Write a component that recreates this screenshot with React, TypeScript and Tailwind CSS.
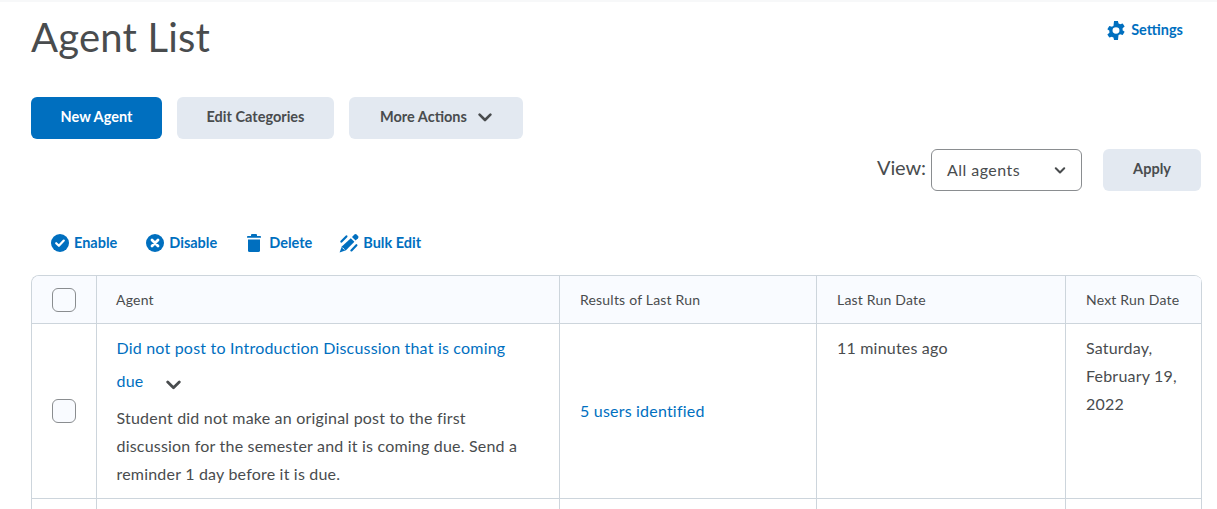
import React from "react";

const blue = "text-[#006fbf]";

function Chevron({ className }: { className?: string }) {
  return (
    <svg viewBox="0 0 14 9" className={className} fill="none" stroke="currentColor" strokeWidth="2.6" strokeLinecap="round" strokeLinejoin="round">
      <path d="M1.6 1.6 7 7 12.4 1.6" />
    </svg>
  );
}

function Gear() {
  return (
    <svg viewBox="1.2 0 15.6 18" className="w-[18px] h-[19px]" preserveAspectRatio="none" fill="#006fbf">
      <path fillRule="evenodd" d="M7.3 0h3.4l.5 2.4c.5.2.9.4 1.3.7l2.3-.8 1.7 3-1.8 1.6c.1.5.1 1.1 0 1.6v.2l1.8 1.6-1.7 3-2.3-.8c-.4.3-.8.5-1.3.7L10.7 18H7.3l-.5-2.4c-.5-.2-.9-.4-1.3-.7l-2.3.8-1.7-3 1.8-1.6a6 6 0 0 1 0-1.8L1.5 7.7l1.7-3 2.3.8c.4-.3.8-.5 1.3-.7L7.3 0ZM9 6a3 3 0 1 0 0 6 3 3 0 0 0 0-6Z" />
    </svg>
  );
}

function EnableIcon() {
  return (
    <svg viewBox="0 0 18 18" className="w-[18px] h-[18px]">
      <circle cx="9" cy="9" r="9" fill="#006fbf" />
      <path d="M5.2 9.2 7.9 11.8 12.8 6.6" fill="none" stroke="#fff" strokeWidth="2.2" strokeLinecap="round" strokeLinejoin="round" />
    </svg>
  );
}

function DisableIcon() {
  return (
    <svg viewBox="0 0 18 18" className="w-[18px] h-[18px]">
      <circle cx="9" cy="9" r="9" fill="#006fbf" />
      <path d="M6 6l6 6M12 6l-6 6" fill="none" stroke="#fff" strokeWidth="2.8" strokeLinecap="round" />
    </svg>
  );
}

function TrashIcon() {
  return (
    <svg viewBox="0 0 14 18" className="w-[14px] h-[18px]" fill="#006fbf">
      <path d="M5 0h4a1 1 0 0 1 1 1v1h3.2a.8.8 0 0 1 0 1.8H.8A.8.8 0 0 1 .8 2H4V1a1 1 0 0 1 1-1Z" />
      <path d="M1 5.4h12V16.4A1.6 1.6 0 0 1 11.4 18H2.6A1.6 1.6 0 0 1 1 16.4Z" />
    </svg>
  );
}

function BulkEditIcon() {
  return (
    <svg viewBox="0 0 20 20" className="w-[20px] h-[20px]" fill="#006fbf">
      <path d="M11.8 5.2 15.4 8.8 7 17.2 0.6 19.4 2.8 13.4Z" />
      <path d="M13 4 15.4 1.6a1.6 1.6 0 0 1 2.2 0l1.4 1.4a1.6 1.6 0 0 1 0 2.2L16.6 7.6Z" />
      <path d="M2.4 8.6 7.4 3.4M12.4 17.4 17.4 12.2" fill="none" stroke="#006fbf" strokeWidth="2.2" strokeLinecap="round" />
      <path d="M3.4 14.6 5.4 16.6" fill="none" stroke="#fff" strokeWidth="1" />
    </svg>
  );
}

function Btn({ children, primary, className }: { children: React.ReactNode; primary?: boolean; className?: string }) {
  return (
    <button
      className={`h-[42px] rounded-md text-[14.5px] pb-[2px] font-bold flex items-center justify-center ${primary ? "bg-[#006fbf] text-white" : "bg-[#e3e9f1] text-[#494c4e]"} ${className ?? ""}`}
    >
      {children}
    </button>
  );
}

function Action({ icon, label, iconWidth, gap }: { icon: React.ReactNode; label: string; iconWidth: string; gap: string }) {
  return (
    <div className={`flex items-center ${gap} ${blue} text-[14.5px] font-bold`}>
      <span className={`flex items-center justify-center ${iconWidth}`}>{icon}</span>
      <span className="-mt-[1px]">{label}</span>
    </div>
  );
}

function Checkbox() {
  return <div className="w-[24px] h-[24px] rounded-[6px] border border-[#8a8d90] bg-[#f9fbff]" />;
}

export default function App() {
  const th = "border-r border-b border-[#cdd5dc] px-5 text-left text-[14px] font-normal text-[#494c4e] tracking-[0.2px]";
  const td = "border-r border-b border-[#cdd5dc] px-5 text-[16px] leading-[28px] text-[#494c4e] tracking-[0.2px]";
  return (
    <div className="h-[509px] overflow-hidden bg-white border-t-2 border-[#f7f8f9] font-['Lato','Liberation_Sans',sans-serif] text-[#494c4e]">
      <div className="pl-[31px] pr-[16px]">
        <div className="flex justify-between items-start h-[95px]">
          <h1 className="text-[40px] leading-[48px] mt-[11px] font-normal tracking-[0.2px] text-[#494c4e]">Agent List</h1>
          <div className={`flex items-center gap-[6px] mt-[19px] mr-[18px] text-[14.5px] font-bold ${blue}`}>
            <Gear />
            <span className="-mt-[2px]">Settings</span>
          </div>
        </div>

        <div className="flex gap-[15px] h-[42px]">
          <Btn primary className="w-[131px]">New Agent</Btn>
          <Btn className="w-[157px]">Edit Categories</Btn>
          <Btn className="w-[174px] gap-[12px]">
            More Actions
            <Chevron className="w-[14px] h-[9px] mt-[1px] -ml-[1px]" />
          </Btn>
        </div>

        <div className="flex justify-end items-center mt-[10px] h-[42px]">
          <span className="text-[20px] mr-[5px] -mt-[6px] tracking-[-0.1px]">View:</span>
          <div className="w-[151px] h-[42px] rounded-md border border-[#8a8d90] flex items-center justify-between pl-[15px] pr-[15px] text-[16px] tracking-[0.45px]">
            All agents
            <Chevron className="w-[12px] h-[7px]" />
          </div>
          <Btn className="w-[98px] ml-[21px]">Apply</Btn>
        </div>

        <div className="flex items-center h-[24px] mt-[40px] pl-[20px]">
          <Action icon={<EnableIcon />} label="Enable" iconWidth="w-[18px]" gap="gap-[5px]" />
          <div className="w-[29px]" />
          <Action icon={<DisableIcon />} label="Disable" iconWidth="w-[18px]" gap="gap-[5px]" />
          <div className="w-[29px]" />
          <Action icon={<TrashIcon />} label="Delete" iconWidth="w-[16px]" gap="gap-[7px]" />
          <div className="w-[27px]" />
          <Action icon={<BulkEditIcon />} label="Bulk Edit" iconWidth="w-[20px]" gap="gap-[4px]" />
        </div>

        <table className="mt-[20px] w-[1170px] table-fixed border-separate border-spacing-0 border-t border-l border-r-0 border-[#cdd5dc] rounded-t-lg overflow-hidden">
          <colgroup>
            <col className="w-[65px]" />
            <col className="w-[463px]" />
            <col className="w-[257px]" />
            <col className="w-[249px]" />
            <col className="w-[136px]" />
          </colgroup>
          <thead>
            <tr className="h-[48px] bg-[#f9fbff]">
              <th className={`${th} px-0`}>
                <div className="flex justify-center"><Checkbox /></div>
              </th>
              <th className={`${th} pl-[19px]`}>Agent</th>
              <th className={th}>Results of Last Run</th>
              <th className={th}>Last Run Date</th>
              <th className={th}>Next Run Date</th>
            </tr>
          </thead>
          <tbody>
            <tr className="h-[175px]">
              <td className={`${td} px-0`}>
                <div className="flex justify-center"><Checkbox /></div>
              </td>
              <td className={`${td} align-top pt-[7px] pl-[19.5px]`}>
                <div className={`${blue} leading-[33px] pr-6`}>
                  Did not post to Introduction Discussion that is coming due
                  <Chevron className="inline-block w-[15px] h-[10px] ml-[23px] align-[-3px] text-[#494c4e]" />
                </div>
                <p className="mt-[7px] pr-[12px]">
                  Student did not make an original post to the first discussion for the semester and it is coming due. Send a reminder 1 day before it is due.
                </p>
              </td>
              <td className={td}>
                <span className={blue}>5 users identified</span>
              </td>
              <td className={`${td} align-top pt-[10px]`}>11 minutes ago</td>
              <td className={`${td} align-top pt-[10px]`}>Saturday, February 19, 2022</td>
            </tr>
            <tr className="h-[60px]">
              <td className={td}></td>
              <td className={td}></td>
              <td className={td}></td>
              <td className={td}></td>
              <td className={td}></td>
            </tr>
          </tbody>
        </table>
      </div>
    </div>
  );
}
